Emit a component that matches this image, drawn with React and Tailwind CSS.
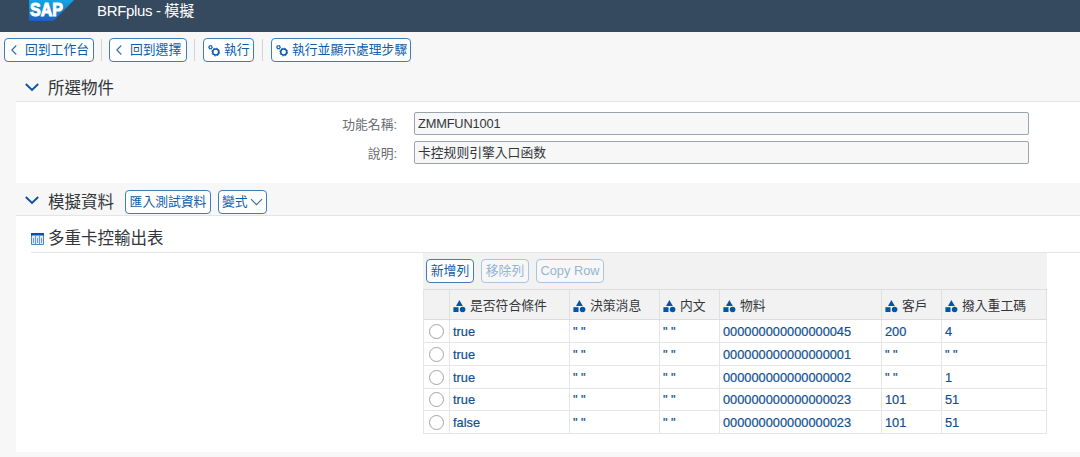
import clsx from 'clsx';

const columns = ['是否符合條件', '決策消息', '内文', '物料', '客戶', '撥入重工碼'];

const rows = [
  { height: 'h-[23px]', cells: ['true', '" "', '" "', '000000000000000045', '200', '4'] },
  { height: 'h-[23px]', cells: ['true', '" "', '" "', '000000000000000001', '" "', '" "'] },
  { height: 'h-[23px]', cells: ['true', '" "', '" "', '000000000000000002', '" "', '1'] },
  { height: 'h-[22px]', cells: ['true', '" "', '" "', '000000000000000023', '101', '51'] },
  { height: 'h-[23px]', cells: ['false', '" "', '" "', '000000000000000023', '101', '51'] },
];

const gridCols = 'grid grid-cols-[26px_120px_90px_60px_162px_60px_105px]';

const SapLogo = () => (
  <svg width="46" height="21" viewBox="0 0 46 21" className="shrink-0">
    <defs>
      <linearGradient id="sapBlue" x1="0" y1="0" x2="0" y2="1">
        <stop offset="0" stopColor="#12a5e5" />
        <stop offset="1" stopColor="#1c61bd" />
      </linearGradient>
    </defs>
    <path d="M0 0H45L24.5 21H0Z" fill="url(#sapBlue)" />
    <text
      x="1"
      y="16.2"
      fontSize="18"
      fontWeight="700"
      fontFamily="Liberation Sans, Arial, sans-serif"
      fill="#fff"
      stroke="#fff"
      strokeWidth="1"
      textLength="33"
      lengthAdjust="spacingAndGlyphs"
    >
      SAP
    </text>
  </svg>
);

const BackIcon = () => (
  <svg width="6" height="10" viewBox="0 0 6 10" fill="none" stroke="#2b6cae" strokeWidth="1.1" className="mb-0.5">
    <path d="M5.3 0.5L0.8 5L5.3 9.5" />
  </svg>
);

const ExecuteIcon = () => (
  <svg width="12" height="12" viewBox="0 0 12 12" fill="none" stroke="#0a5ba6">
    <circle cx="2.5" cy="2.2" r="1.5" strokeWidth="1.1" />
    <circle cx="2.5" cy="2.2" r="2.1" strokeWidth="0.7" strokeDasharray="0.85 0.8" />
    <circle cx="7.7" cy="7.1" r="3" strokeWidth="1.5" />
    <circle cx="7.7" cy="7.1" r="3.9" strokeWidth="0.9" strokeDasharray="1.53 1.53" />
  </svg>
);

const ChevronDown = () => (
  <svg width="14" height="9" viewBox="0 0 14 9" fill="none" stroke="#0854a0" strokeWidth="1.9" className="mb-0.5">
    <path d="M0.8 1L7 7L13.2 1" />
  </svg>
);

const TableIcon = () => (
  <svg width="13" height="13" viewBox="0 0 13 13" className="mt-[3px] shrink-0">
    <path d="M0.5 0.5H12.5V11.5H0.5Z" fill="#dfeaf4" stroke="#4f87bd" />
    <path d="M0 0H13V2.5H0Z" fill="#0854a0" />
    <path d="M4.5 3V11M8.5 3V11M2.5 5V10M6.5 5V10M10.5 5V10" stroke="#5c91c4" strokeWidth="0.9" />
  </svg>
);

// triangle over square and circle, marks an element data object
const ElementIcon = () => (
  <svg width="13" height="13" viewBox="0 0 13 13" fill="#0854a0" className="mt-[3px] shrink-0">
    <path d="M6.4 0L9.8 6H3Z" />
    <path d="M0.4 7.2H5.5V12H0.4Z" />
    <circle cx="9.6" cy="9.5" r="2.8" />
  </svg>
);

const Button = ({ className, disabled, children }) => (
  <button
    className={clsx(
      'flex shrink-0 items-center rounded-[4px] border h-6 pt-px text-[12.8px] leading-none whitespace-nowrap',
      disabled ? 'border-[#a9c5df] bg-[#f7f7f7] text-[#94b5d4]' : 'border-[#3f7db9] bg-white text-[#0f5ca8]',
      className
    )}
  >
    {children}
  </button>
);

const Divider = ({ className }) => <div className={clsx('h-[22px] w-px bg-[#d4d4d4]', className)} />;

const Field = ({ label, value }) => (
  <div className="flex h-[23px] items-center">
    <label className="w-[381px] pt-[3px] text-right text-[12.8px] leading-none text-[#6a6d70]">{label}:</label>
    <div className="ml-[17px] flex h-[23px] w-[615px] items-center rounded-[2px] border border-[#9aa3ae] bg-[#f7f7f7] pt-px pl-[3px] text-[12.8px] leading-none">
      {value}
    </div>
  </div>
);

export default function App() {
  return (
    <div className="h-[457px] w-[1080px] overflow-hidden bg-[#f7f7f7] font-['Liberation_Sans','Noto_Sans_CJK_TC',sans-serif] text-[#32363a]">
      <header className="flex h-8 items-start bg-[#354a5f] pl-[29px]">
        <SapLogo />
        <h1 className="ml-[22px] pt-[3px] text-[15px] leading-[16px] text-white">
          <span className="tracking-[-0.35px]">BRFplus - </span>
          模擬
        </h1>
      </header>

      <nav className="flex h-[43px] items-start pt-1.5 pl-1">
        <Button className="w-[90px] gap-2 pl-1.5">
          <BackIcon />
          回到工作台
        </Button>
        <Divider className="ml-[7px] mt-px" />
        <Button className="ml-[7px] w-[78px] gap-2 pl-1.5">
          <BackIcon />
          回到選擇
        </Button>
        <Divider className="ml-[7px] mt-px" />
        <Button className="ml-2 w-[51px] gap-1 pl-1">
          <ExecuteIcon />
          執行
        </Button>
        <Divider className="ml-2 mt-px" />
        <Button className="ml-2 w-[140px] gap-1 pl-1">
          <ExecuteIcon />
          執行並顯示處理步驟
        </Button>
      </nav>

      <main className="pl-4">
        <section>
          <div className="flex h-[27px] items-center border-b border-[#e5e5e5] pl-[9px]">
            <ChevronDown />
            <h2 className="ml-[9px] text-[16.5px] leading-none">所選物件</h2>
          </div>
          <div className="flex h-[81px] flex-col gap-[6px] bg-white pt-[10px]">
            <Field label="功能名稱" value={<span className="tracking-[-0.15px]">ZMMFUN1001</span>} />
            <Field label="說明" value="卡控规则引擎入口函数" />
          </div>
        </section>

        <section>
          <div className="flex h-[33px] items-center border-b border-[#e5e5e5] pt-[5px] pl-[9px]">
            <ChevronDown />
            <h2 className="ml-[9px] pt-px text-[16.5px] leading-none">模擬資料</h2>
            <Button className="ml-[11px] w-[86px] justify-center">匯入測試資料</Button>
            <Button className="ml-[7px] w-[49px] gap-0.5 pl-[3px]">
              變式
              <svg width="13" height="8" viewBox="0 0 13 8" fill="none" stroke="#2b6cae" strokeWidth="1.1">
                <path d="M1 1.2L6.5 6.7L12 1.2" />
              </svg>
            </Button>
          </div>

          <div className="h-[236px] bg-white pl-[15px]">
            <div className="flex h-[37px] items-center border-b border-[#e5e5e5] pt-[8px]">
              <TableIcon />
              <h3 className="ml-1 pt-px text-[16.5px] leading-none">多重卡控輸出表</h3>
            </div>

            <div className="ml-[392px] w-[624px]">
              <div className="flex h-9 items-center gap-[7px] bg-[#f2f2f2] pl-[3px]">
                <Button className="w-12 justify-center">新增列</Button>
                <Button className="w-12 justify-center" disabled>移除列</Button>
                <Button className="w-[68px] justify-center" disabled>Copy Row</Button>
              </div>

              <div className="border-l border-[#e5e5e5]">
                <div className={clsx(gridCols, 'h-[31px] border-y border-[#dcdcdc] bg-[#f2f2f2]')}>
                  <div className="border-r border-[#e0e0e0]" />
                  {columns.map((name) => (
                    <div key={name} className="flex items-center gap-1 border-r border-[#e0e0e0] pl-[3px]">
                      <ElementIcon />
                      <span className="pt-[3px] text-[12.8px] leading-none whitespace-nowrap">{name}</span>
                    </div>
                  ))}
                </div>
                {rows.map((row, i) => (
                  <div key={i} className={clsx(gridCols, row.height, 'border-b border-[#e5e5e5]')}>
                    <div className="flex items-center justify-center border-r border-[#e5e5e5] pr-px">
                      <span className="h-[15px] w-[15px] rounded-full border border-[#a0a4a9] bg-white" />
                    </div>
                    {row.cells.map((cell, j) => (
                      <div
                        key={j}
                        className="flex items-center border-r border-[#e5e5e5] pt-0.5 pl-[3px] text-[12.8px] leading-none text-[#0f4f93] [-webkit-text-stroke:0.2px]"
                      >
                        {cell}
                      </div>
                    ))}
                  </div>
                ))}
              </div>
            </div>
          </div>
        </section>
      </main>
    </div>
  );
}
